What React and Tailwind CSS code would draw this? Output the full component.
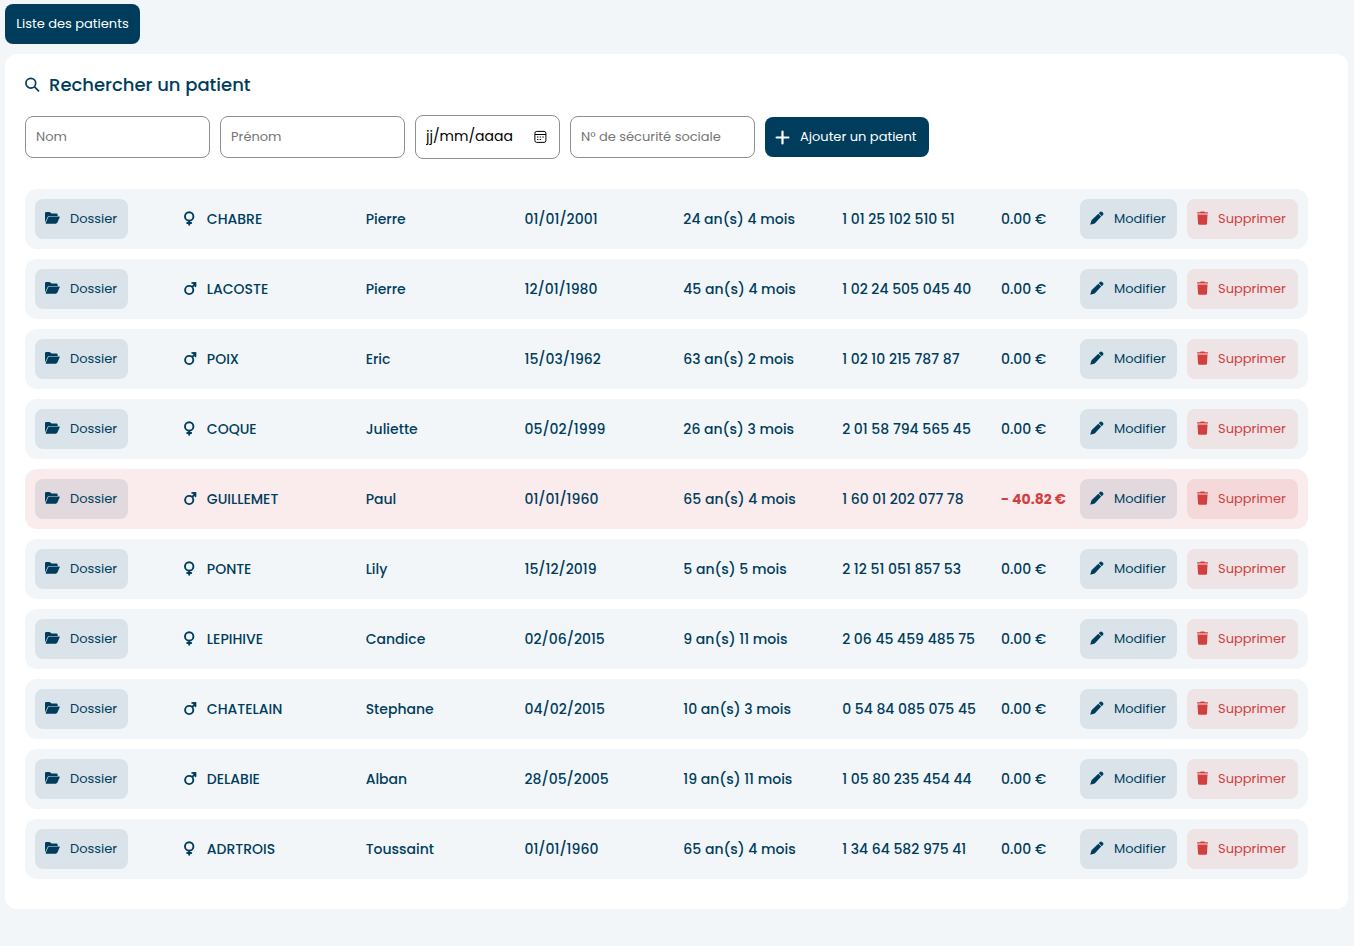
const patients = [
    { sex: 'F', lastName: 'CHABRE', firstName: 'Pierre', birth: '01/01/2001', age: '24 an(s) 4 mois', ssn: '1 01 25 102 510 51', balance: '0.00 €' },
    { sex: 'M', lastName: 'LACOSTE', firstName: 'Pierre', birth: '12/01/1980', age: '45 an(s) 4 mois', ssn: '1 02 24 505 045 40', balance: '0.00 €' },
    { sex: 'M', lastName: 'POIX', firstName: 'Eric', birth: '15/03/1962', age: '63 an(s) 2 mois', ssn: '1 02 10 215 787 87', balance: '0.00 €' },
    { sex: 'F', lastName: 'COQUE', firstName: 'Juliette', birth: '05/02/1999', age: '26 an(s) 3 mois', ssn: '2 01 58 794 565 45', balance: '0.00 €' },
    { sex: 'M', lastName: 'GUILLEMET', firstName: 'Paul', birth: '01/01/1960', age: '65 an(s) 4 mois', ssn: '1 60 01 202 077 78', balance: '- 40.82 €', debt: true },
    { sex: 'F', lastName: 'PONTE', firstName: 'Lily', birth: '15/12/2019', age: '5 an(s) 5 mois', ssn: '2 12 51 051 857 53', balance: '0.00 €' },
    { sex: 'F', lastName: 'LEPIHIVE', firstName: 'Candice', birth: '02/06/2015', age: '9 an(s) 11 mois', ssn: '2 06 45 459 485 75', balance: '0.00 €' },
    { sex: 'M', lastName: 'CHATELAIN', firstName: 'Stephane', birth: '04/02/2015', age: '10 an(s) 3 mois', ssn: '0 54 84 085 075 45', balance: '0.00 €' },
    { sex: 'M', lastName: 'DELABIE', firstName: 'Alban', birth: '28/05/2005', age: '19 an(s) 11 mois', ssn: '1 05 80 235 454 44', balance: '0.00 €' },
    { sex: 'F', lastName: 'ADRTROIS', firstName: 'Toussaint', birth: '01/01/1960', age: '65 an(s) 4 mois', ssn: '1 34 64 582 975 41', balance: '0.00 €' },
];

function SearchIcon() {
    return (
        <svg viewBox="0 0 16 16" className="size-4 shrink-0" fill="none" stroke="currentColor" strokeWidth="1.7" aria-hidden="true">
            <circle cx="5.8" cy="6.2" r="4.9" />
            <path d="M9.3 9.7 14 14.4" />
        </svg>
    );
}

function PlusIcon() {
    return (
        <svg viewBox="0 0 15 15" className="size-[15px] shrink-0" fill="none" stroke="currentColor" strokeWidth="2.2" strokeLinecap="round" aria-hidden="true">
            <path d="M7.5 1.6V13.4M1.6 7.5H13.4" />
        </svg>
    );
}

function CalendarIcon() {
    return (
        <svg viewBox="0 0 13 15" className="h-[15px] w-[13px] shrink-0" fill="none" stroke="currentColor" aria-hidden="true">
            <rect x=".9" y="1.4" width="11" height="11" rx="1.8" strokeWidth="1" />
            <path d="M1 4.5H12" strokeWidth="1" />
            <path d="M3 7H4.4M5.7 7H7.1M8.4 7H9.8M3 9.5H4.4M5.7 9.5H7.1" strokeWidth="1.2" />
        </svg>
    );
}

function FolderIcon() {
    return (
        <svg viewBox="0 0 15 16" className="h-4 w-[15px] shrink-0" fill="currentColor" aria-hidden="true">
            <path d="M1.3 1H4.5Q5 1 5.4 1.4L6.6 2.5H11.3Q12.7 2.5 12.7 3.9V4.9H4.4Q3.2 4.9 2.6 6L.5 10.6Q0 11.4 0 10.2V2.3Q0 1 1.3 1Z" />
            <path d="M4.6 5.4H14.1Q15.1 5.4 14.7 6.3L12.4 11.6Q11.9 12.7 10.7 12.7H1.4Q.4 12.7.8 11.8L3.1 6.4Q3.6 5.4 4.6 5.4Z" />
        </svg>
    );
}

function FemaleIcon() {
    return (
        <svg viewBox="0 0 14 16" className="h-4 w-3.5" fill="none" stroke="currentColor" strokeWidth="1.9" strokeLinecap="round" aria-hidden="true">
            <circle cx="5.2" cy="5.4" r="4.2" />
            <path d="M5.2 9.8V13.7M3.2 12H7.2" />
        </svg>
    );
}

function MaleIcon() {
    return (
        <svg viewBox="0 0 14 16" className="h-4 w-3.5" fill="none" stroke="currentColor" strokeWidth="1.9" aria-hidden="true">
            <circle cx="5.2" cy="9" r="4.1" />
            <path d="M8.2 6 11 3.2" />
            <path d="M7.6 1.2H12.2V5.8L10.6 4.4 9 2.8Z" fill="currentColor" stroke="none" />
            <path d="M8 2H11.4V5.4" strokeWidth="1.6" strokeLinecap="round" />
        </svg>
    );
}

function PencilIcon() {
    return (
        <svg viewBox="0 0 14 16" className="h-4 w-3.5 shrink-0" fill="currentColor" aria-hidden="true">
            <path d="M8.3 2.7 11.2 5.6 5.2 12Q4.7 12.5 4 12.7L1 13.6Q.1 13.8.4 12.9L1.3 9.9Q1.5 9.3 2 8.8Z" />
            <path d="M8.8 2.2 9.9 1.1Q11-.1 12.2 1L12.9 1.7Q14 2.9 12.9 4.1L11.8 5.2Z" />
        </svg>
    );
}

function TrashIcon() {
    return (
        <svg viewBox="0 0 11 16" className="h-4 w-[11px] shrink-0" fill="currentColor" aria-hidden="true">
            <path d="M.5 1.2H3L3.8.5H7.2L8 1.2H10.5Q11 1.2 11 1.7V2.6H0V1.7Q0 1.2.5 1.2Z" />
            <path d="M.5 3.4H10.5L10 12.4Q9.9 13.8 8.6 13.8H2.4Q1.1 13.8 1 12.4Z" />
        </svg>
    );
}

function RowButton({ icon, label, className }) {
    return (
        <button type="button" className={`flex h-10 items-center gap-2.5 rounded-lg px-2.5 text-[13px] font-normal ${className}`}>
            {icon}
            {label}
        </button>
    );
}

function PatientRow({ patient }) {
    const background = patient.debt ? 'bg-[#faebec]' : 'bg-[#f2f6f9]';

    return (
        <tr className={`h-[60px] ${background}`}>
            <td className="rounded-l-xl pl-2.5">
                <RowButton icon={<FolderIcon />} label="Dossier" className="min-w-[93px] bg-[#003d5c]/10" />
            </td>
            <td>{patient.sex === 'F' ? <FemaleIcon /> : <MaleIcon />}</td>
            <td>{patient.lastName}</td>
            <td>{patient.firstName}</td>
            <td>{patient.birth}</td>
            <td>{patient.age}</td>
            <td>{patient.ssn}</td>
            <td className={patient.debt ? 'font-bold text-[#d23f3f]' : ''}>{patient.balance}</td>
            <td className="pr-2.5">
                <RowButton icon={<PencilIcon />} label="Modifier" className="w-full bg-[#003d5c]/10" />
            </td>
            <td className="rounded-r-xl pr-2.5">
                <RowButton icon={<TrashIcon />} label="Supprimer" className="w-full bg-[#d23f3f]/10 text-[#d23f3f]" />
            </td>
        </tr>
    );
}

const fieldClass = 'rounded-lg border border-[#8f8f8f] bg-white px-2.5';
const textFieldClass = `h-[42px] w-[185px] text-[13px] placeholder:text-[#757575] ${fieldClass}`;

export default function App() {
    return (
        <div className="min-h-screen bg-[#f2f6f9] px-[5px] py-1 font-['Poppins','Inter',sans-serif] text-sm text-[#003d5c]">
            <nav>
                <a href="#patients" className="inline-flex h-10 min-w-[135px] items-center justify-center rounded-lg bg-[#003d5c] px-2.5 text-[13px] text-white">
                    Liste des patients
                </a>
            </nav>

            <main id="patients" className="mt-2.5 mr-px rounded-xl bg-white p-5">
                <h1 className="flex h-[22px] items-center gap-2 text-lg font-medium">
                    <SearchIcon />
                    Rechercher un patient
                </h1>

                <form className="mt-[19px] flex items-center gap-2.5">
                    <input type="text" aria-label="Nom" placeholder="Nom" className={textFieldClass} />
                    <input type="text" aria-label="Prénom" placeholder="Prénom" className={textFieldClass} />
                    <div className={`flex h-11 w-[145px] items-center text-black ${fieldClass}`}>
                        <input type="text" aria-label="Date de naissance" placeholder="jj/mm/aaaa" className="min-w-0 flex-1 pb-0.5 outline-none placeholder:text-black" />
                        <button type="button" aria-label="Ouvrir le calendrier" className="pr-0.5">
                            <CalendarIcon />
                        </button>
                    </div>
                    <input type="text" aria-label="N° de sécurité sociale" placeholder="N° de sécurité sociale" className={textFieldClass} />
                    <button type="button" className="flex h-10 min-w-[164px] items-center gap-2.5 rounded-lg bg-[#003d5c] px-2.5 text-[13px] text-white">
                        <PlusIcon />
                        Ajouter un patient
                    </button>
                </form>

                <div className="mt-5 pr-5">
                    <table className="w-full table-fixed border-separate border-spacing-x-0 border-spacing-y-2.5 text-left font-medium">
                        <colgroup>
                            <col />
                            <col className="w-[23px]" />
                            <col span={5} />
                            <col className="w-[79px]" />
                            <col className="w-[107px]" />
                            <col className="w-[121px]" />
                        </colgroup>
                        <tbody>
                            {patients.map((patient) => (
                                <PatientRow key={patient.ssn} patient={patient} />
                            ))}
                        </tbody>
                    </table>
                </div>
            </main>
        </div>
    );
}
